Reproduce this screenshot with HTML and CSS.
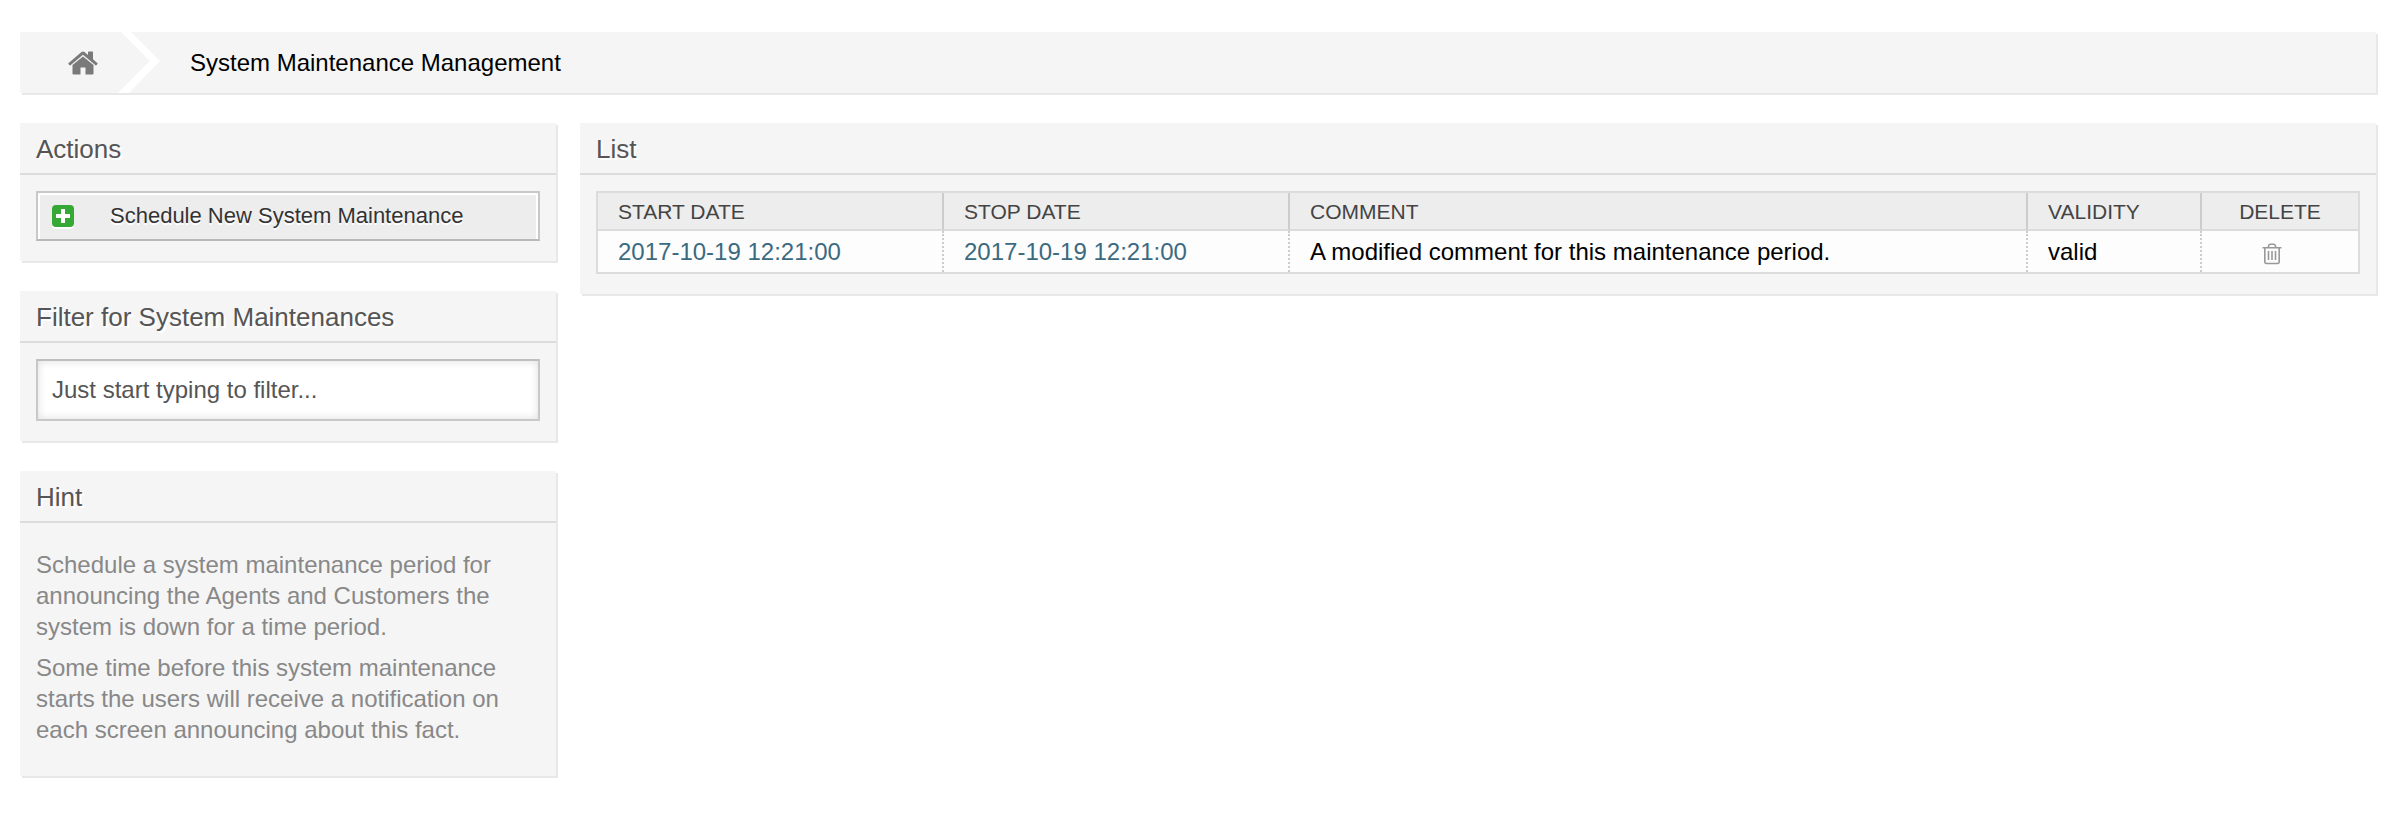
FILE: index.html
```html
<!DOCTYPE html>
<html lang="en">
<head>
<meta charset="utf-8">
<title>System Maintenance Management</title>
<link rel="stylesheet" href="styles.css">
</head>
<body>
<nav class="breadcrumb" aria-label="Breadcrumb">
  <a class="home" href="#" aria-label="Home">
    <svg width="30" height="24" viewBox="0 0 30 24" fill="#7a7a7a"><path d="M15 5.5 4.5 14v8.500q0 1 1 1H12.500v-7h5v7h7q1 0 1-1V14z"/><path d="M.4 12.200 13.500 1q1.500-1 3 0L20 4V1q0-.6.6-.6h3.800q.6 0 .6.600v7.200l4.500 4q.3.300 0 .700l-1.200 1.300q-.4.400-.8 0L15 3.800 2.500 14.200q-.4.400-.8 0L.4 12.900q-.3-.4 0-.7z"/></svg>
  </a>
  <svg class="divider" width="42" height="61" viewBox="0 0 42 61" fill="#fff"><path d="M3 0h10l29 29-31 32H0l32-32z"/></svg>
  <span class="current">System Maintenance Management</span>
</nav>
<div class="columns">
  <aside class="sidebar">
    <section class="widget">
      <h2 class="widget-title">Actions</h2>
      <div class="widget-body">
        <button class="action" type="button">
          <svg width="22" height="24" viewBox="0 0 22 24"><rect y="2" width="22" height="22" rx="4" fill="#fff"/><rect width="22" height="22" rx="4" fill="#35a835"/><path d="M9 4h4v5h5v4h-5v5H9v-5H4V9h5z" fill="#fff"/></svg>
          <span>Schedule New System Maintenance</span>
        </button>
      </div>
    </section>
    <section class="widget">
      <h2 class="widget-title"><label for="filter">Filter for System Maintenances</label></h2>
      <div class="widget-body">
        <input class="filter" id="filter" type="text" placeholder="Just start typing to filter...">
      </div>
    </section>
    <section class="widget">
      <h2 class="widget-title">Hint</h2>
      <div class="widget-body hint">
        <p>Schedule a system maintenance period for announcing the Agents and Customers the system is down for a time period.</p>
        <p>Some time before this system maintenance starts the users will receive a notification on each screen announcing about this fact.</p>
      </div>
    </section>
  </aside>
  <main class="content">
    <section class="widget">
      <h2 class="widget-title">List</h2>
      <div class="widget-body">
        <table class="list">
          <colgroup><col class="col-date"><col class="col-date"><col><col class="col-validity"><col class="col-delete"></colgroup>
          <thead>
            <tr><th scope="col">START DATE</th><th scope="col">STOP DATE</th><th scope="col">COMMENT</th><th scope="col">VALIDITY</th><th scope="col" class="center">DELETE</th></tr>
          </thead>
          <tbody>
            <tr>
              <td><a href="#">2017-10-19 12:21:00</a></td>
              <td><a href="#">2017-10-19 12:21:00</a></td>
              <td>A modified comment for this maintenance period.</td>
              <td>valid</td>
              <td class="center"><a class="trash" href="#" aria-label="Delete"><svg width="20" height="22" viewBox="0 0 20 22" fill="none" stroke="#999"><path d="M.5 4.750h19" stroke-width="1.500"/><path d="M6 4.500 7 2q.3-.8 1.200-.8h3.600q.9 0 1.200.8l1 2.500M2.800 5v13.500q0 2 1.700 2h11q1.700 0 1.700-2V5" stroke-width="1.600"/><path d="M6.500 8v9M10 8v9M13.500 8v9" stroke-width="1.600"/></svg></a></td>
            </tr>
          </tbody>
        </table>
      </div>
    </section>
  </main>
</div>
</body>
</html>
```
FILE: styles.css
```css
* { box-sizing: border-box; }
body {
  margin: 0;
  padding: 32px 24px 32px 20px;
  background: #fff;
  color: #000;
  font: 24px/31px "Liberation Sans", Arial, sans-serif;
}
a { color: #3b6a80; text-decoration: none; }
.breadcrumb {
  display: flex;
  align-items: center;
  background: #f5f5f5;
  box-shadow: 2px 2px 0 #e8e8e8;
}
.home { display: flex; padding: 0 20px 0 48px; }
.divider { display: block; }
.current { padding-left: 30px; }
.columns { display: flex; align-items: flex-start; gap: 24px; margin-top: 30px; }
.sidebar { flex: 0 0 536px; display: grid; gap: 30px; }
.content { flex: 1; min-width: 0; }
.widget { background: #f5f5f5; box-shadow: 2px 2px 0 #e8e8e8; }
.widget-title {
  margin: 0;
  padding: 11px 16px 9px;
  border-bottom: 2px solid #dcdcdc;
  color: #555;
  font-size: 26px;
  font-weight: normal;
  line-height: 30px;
  text-shadow: 2px 2px 0 #fff;
}
.widget-body { padding: 16px 16px 20px; }
.action {
  display: flex;
  align-items: center;
  gap: 36px;
  width: 100%;
  height: 50px;
  padding: 2px 14px 0;
  border: 2px solid #c8c8c8;
  border-bottom-color: #b8b8b8;
  background: #ededed;
  box-shadow: inset 2px 0 #fff, inset -2px 0 #fff, inset 0 2px #fff;
  color: #333;
  font: inherit;
  font-size: 22px;
  text-shadow: 0 2px 0 #fff;
}
.action span { padding-bottom: 4px; }
.filter {
  display: block;
  width: 100%;
  height: 62px;
  padding: 0 14px;
  border: 2px solid #c8c8c8;
  border-top-color: #bfbfbf;
  border-radius: 0;
  background: #fff;
  box-shadow: inset 0 0 8px #ddd;
  color: #555;
  font: inherit;
}
.filter::placeholder { color: #555; opacity: 1; }
.hint { padding: 26px 32px 31px 16px; color: #888; }
.hint p { margin: 0 0 10px; }
.hint p:last-child { margin: 0; }
.list {
  width: 100%;
  table-layout: fixed;
  border: 2px solid #dcdcdc;
  border-spacing: 0;
}
.col-date { width: 346px; }
.col-validity { width: 174px; }
.col-delete { width: 156px; }
.list th {
  height: 38px;
  padding: 0 20px;
  border-right: 2px solid #ccc;
  border-bottom: 2px solid #dcdcdc;
  background: #ededed;
  color: #444;
  font-size: 21px;
  font-weight: normal;
  text-align: left;
}
.list td {
  height: 41px;
  padding: 0 20px;
  border-right: 2px dotted #ccc;
  background: #fdfdfd;
}
.list th:last-child, .list td:last-child { border-right: 0; }
.list .center { text-align: center; }
.trash { display: flex; justify-content: center; padding: 4px 16px 0 0; }
```
